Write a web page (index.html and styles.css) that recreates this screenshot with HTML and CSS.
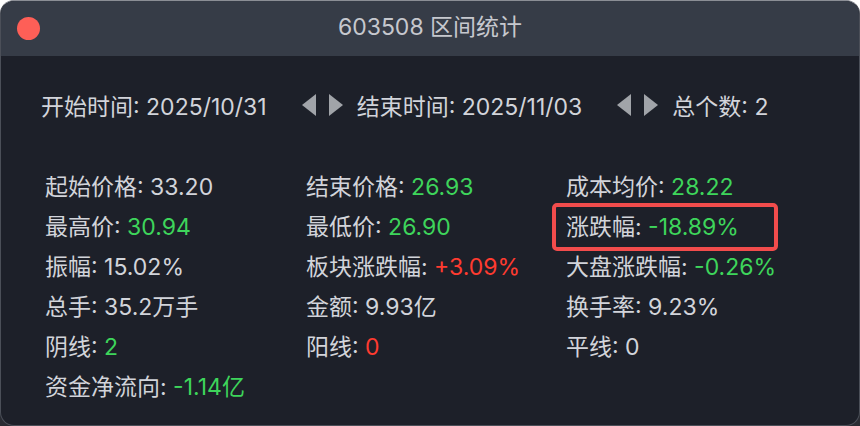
FILE: index.html
```html
<!DOCTYPE html>
<html>
<head>
  <title>603508 区间统计</title>
  <link rel="stylesheet" href="styles.css">
</head>
<body>
  <div class="window">
    <header class="titlebar">
      <span class="close-dot"></span>
      <h1>603508 区间统计</h1>
    </header>
    <main class="content">
      <div class="range">
        <span>开始时间: 2025/10/31</span>
        <span class="arrows"><i class="tri left"></i><i class="tri right"></i></span>
        <span>结束时间: 2025/11/03</span>
        <span class="arrows"><i class="tri left"></i><i class="tri right"></i></span>
        <span>总个数: 2</span>
      </div>
      <div class="stats">
        <p>起始价格: 33.20</p>
        <p>结束价格: <span class="green">26.93</span></p>
        <p>成本均价: <span class="green">28.22</span></p>

        <p>最高价: <span class="green">30.94</span></p>
        <p>最低价: <span class="green">26.90</span></p>
        <p class="marked">涨跌幅: <span class="green">-18.89%</span></p>

        <p>振幅: 15.02%</p>
        <p>板块涨跌幅: <span class="red">+3.09%</span></p>
        <p>大盘涨跌幅: <span class="green">-0.26%</span></p>

        <p>总手: 35.2万手</p>
        <p>金额: 9.93亿</p>
        <p>换手率: 9.23%</p>

        <p>阴线: <span class="green">2</span></p>
        <p>阳线: <span class="red">0</span></p>
        <p>平线: 0</p>

        <p>资金净流向: <span class="green">-1.14亿</span></p>
      </div>
    </main>
  </div>
</body>
</html>
```

FILE: styles.css
```css
html, body {
  margin: 0;
  padding: 0;
  height: 100%;
  background: linear-gradient(#ffffff 50%, #2a2c33 50%);
}
body {
  font-family: Inter, "Noto Sans CJK SC", sans-serif;
  color: #d2d4da;
}
.window {
  box-sizing: border-box;
  width: 860px;
  height: 426px;
  border: 1px solid #4b4f58;
  border-top-color: #8b8e95;
  border-radius: 14px;
  overflow: hidden;
  background-color: #1d2029;
  display: flex;
  flex-direction: column;
}
.titlebar {
  position: relative;
  height: 55px;
  flex: none;
  background-color: #363c47;
  display: flex;
  align-items: center;
  justify-content: center;
}
.titlebar h1 {
  margin: 0 0 8px 0;
  font-size: 23px;
  font-weight: normal;
  color: #c6c8ce;
}
.close-dot {
  position: absolute;
  left: 16px;
  top: 16px;
  width: 23px;
  height: 23px;
  border-radius: 50%;
  background-color: #fe5f57;
}
.content {
  padding: 34px 0 0 40px;
}
.range {
  display: flex;
  align-items: center;
  font-size: 23px;
  height: 30px;
}
.arrows {
  display: flex;
  gap: 13px;
  margin: 0 14px 0 35px;
}
.tri {
  width: 0;
  height: 0;
  border-top: 11px solid transparent;
  border-bottom: 11px solid transparent;
}
.tri.left {
  border-right: 14px solid #a1a4a9;
}
.tri.right {
  border-left: 14px solid #a1a4a9;
}
.stats {
  display: grid;
  grid-template-columns: 261px 260px 260px;
  grid-auto-rows: 40px;
  margin-top: 47px;
  padding-left: 4px;
  font-size: 23px;
}
.stats p {
  margin: 0;
  line-height: 40px;
  white-space: nowrap;
}
.green {
  color: #3ed55b;
}
.red {
  color: #ff3b30;
}
.stats .marked {
  box-sizing: border-box;
  width: 226px;
  height: 48px;
  margin: -4px 0 -4px -14px;
  padding-left: 10px;
  border: 4px solid #f24c4c;
  border-radius: 5px;
}
```
